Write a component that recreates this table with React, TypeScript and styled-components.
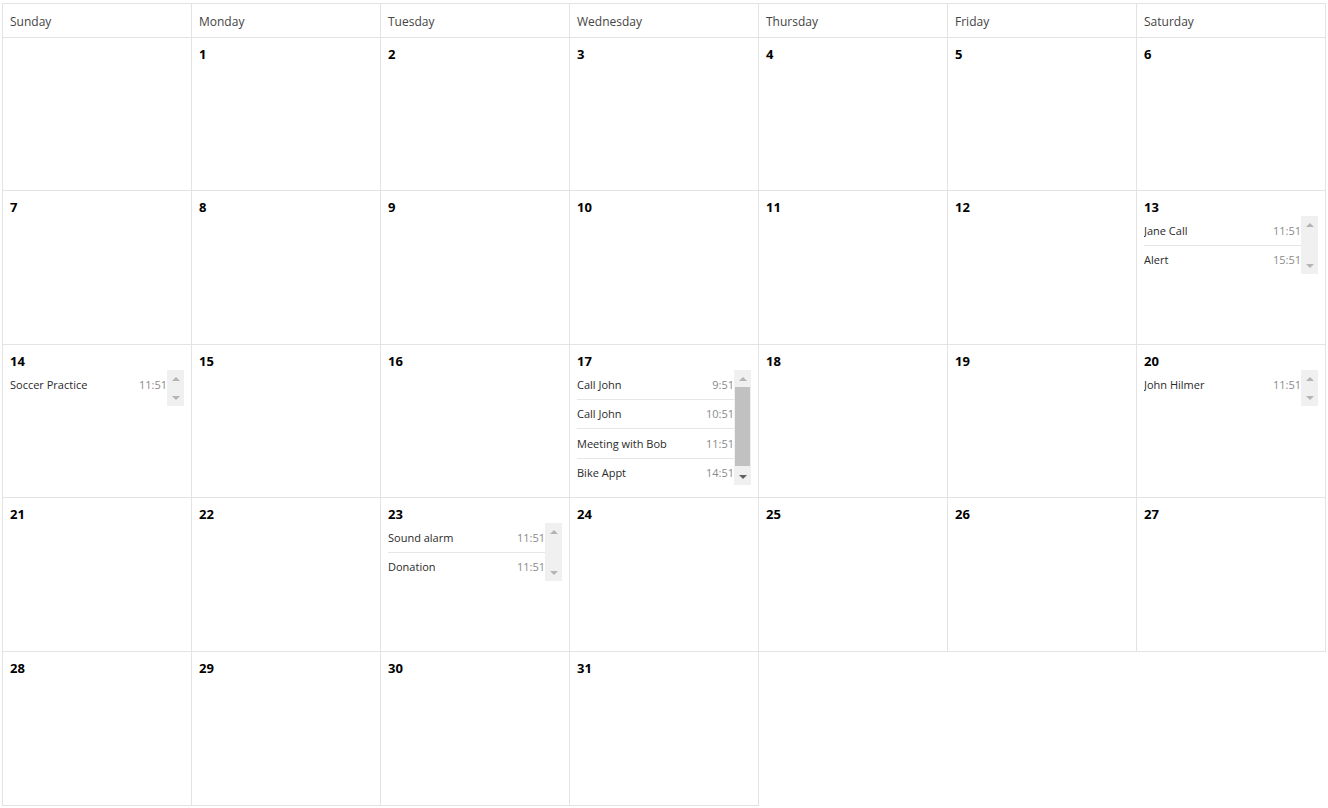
import React from "react";
import styled, { createGlobalStyle } from "styled-components";

const GlobalStyle = createGlobalStyle`
  html, body { margin: 0; padding: 0; background: #fff; }
  body { font-family: "Open Sans", "Noto Sans", Arial, sans-serif; }
`;

type CalEvent = { title: string; time: string };

const DAYS = ["Sunday", "Monday", "Tuesday", "Wednesday", "Thursday", "Friday", "Saturday"];

const EVENTS: Record<number, CalEvent[]> = {
  13: [
    { title: "Jane Call", time: "11:51" },
    { title: "Alert", time: "15:51" },
  ],
  14: [{ title: "Soccer Practice", time: "11:51" }],
  17: [
    { title: "Call John", time: "9:51" },
    { title: "Call John", time: "10:51" },
    { title: "Meeting with Bob", time: "11:51" },
    { title: "Bike Appt", time: "14:51" },
  ],
  20: [{ title: "John Hilmer", time: "11:51" }],
  23: [
    { title: "Sound alarm", time: "11:51" },
    { title: "Donation", time: "11:51" },
  ],
};

const Page = styled.div`
  padding: 3px 0 0 2px;
`;

const Grid = styled.div`
  display: grid;
  grid-template-columns: repeat(7, 189px);
  grid-template-rows: 34px 153px 154px 153px 154px 154px;
  border-left: 1px solid #e3e3e3;
  border-top: 1px solid #e3e3e3;
  width: max-content;
`;

const HeaderCell = styled.div`
  box-sizing: border-box;
  border-right: 1px solid #e3e3e3;
  border-bottom: 1px solid #e3e3e3;
  padding: 2px 7px 0 7px;
  display: flex;
  align-items: center;
  font-size: 12px;
  color: #444;
`;

const DayCell = styled.div`
  box-sizing: border-box;
  border-right: 1px solid #e3e3e3;
  border-bottom: 1px solid #e3e3e3;
  padding: 7px 7px 0 7px;
  display: flex;
  flex-direction: column;
  min-width: 0;
`;

const DateNum = styled.div`
  font-size: 13px;
  font-weight: 700;
  line-height: 18px;
  height: 18px;
  color: #000;
`;

const EventsBox = styled.div`
  display: flex;
  align-items: stretch;
  max-height: 115px;
`;

const EventList = styled.div`
  flex: 1;
  min-width: 0;
  overflow: hidden;
`;

const EventRow = styled.div`
  display: flex;
  align-items: center;
  justify-content: space-between;
  height: 28.5px;
  font-size: 11px;
  border-bottom: 1px solid #e6e6e6;
  &:last-child { border-bottom: none; }
`;

const EventTitle = styled.span`
  color: #2a2a2a;
  white-space: nowrap;
`;

const EventTime = styled.span`
  color: #8a8a8a;
  white-space: nowrap;
`;

const ScrollTrack = styled.div`
  width: 17px;
  flex: none;
  background: #f0f0f0;
  display: flex;
  flex-direction: column;
`;

const ArrowBox = styled.div`
  height: 17px;
  flex: none;
  display: flex;
  align-items: center;
  justify-content: center;
`;

const Arrow = styled.div<{ $dir: "up" | "down"; $active?: boolean }>`
  width: 0;
  height: 0;
  border-left: 4px solid transparent;
  border-right: 4px solid transparent;
  ${(p) =>
    p.$dir === "up"
      ? `border-bottom: 4px solid ${p.$active ? "#606060" : "#b4b4b4"};`
      : `border-top: 4px solid ${p.$active ? "#606060" : "#b4b4b4"};`}
`;

const ThumbArea = styled.div`
  flex: 1;
  display: flex;
  padding: 0 1px 2px 1px;
`;

const Thumb = styled.div`
  flex: 1;
  background: #c1c1c1;
`;

function Scrollbar({ overflow }: { overflow: boolean }) {
  return (
    <ScrollTrack>
      <ArrowBox>
        <Arrow $dir="up" />
      </ArrowBox>
      <ThumbArea>{overflow && <Thumb />}</ThumbArea>
      <ArrowBox>
        <Arrow $dir="down" $active={overflow} />
      </ArrowBox>
    </ScrollTrack>
  );
}

function Day({ date }: { date: number | null }) {
  const events = date ? EVENTS[date] : undefined;
  return (
    <DayCell>
      <DateNum>{date ?? ""}</DateNum>
      {events && (
        <EventsBox>
          <EventList>
            {events.map((e, i) => (
              <EventRow key={i}>
                <EventTitle>{e.title}</EventTitle>
                <EventTime>{e.time}</EventTime>
              </EventRow>
            ))}
          </EventList>
          <Scrollbar overflow={events.length > 3} />
        </EventsBox>
      )}
    </DayCell>
  );
}

export default function App() {
  const cells: (number | null)[] = [null];
  for (let d = 1; d <= 31; d++) cells.push(d);
  return (
    <Page>
      <GlobalStyle />
      <Grid>
        {DAYS.map((d) => (
          <HeaderCell key={d}>{d}</HeaderCell>
        ))}
        {cells.map((d, i) => (
          <Day key={i} date={d} />
        ))}
      </Grid>
    </Page>
  );
}
